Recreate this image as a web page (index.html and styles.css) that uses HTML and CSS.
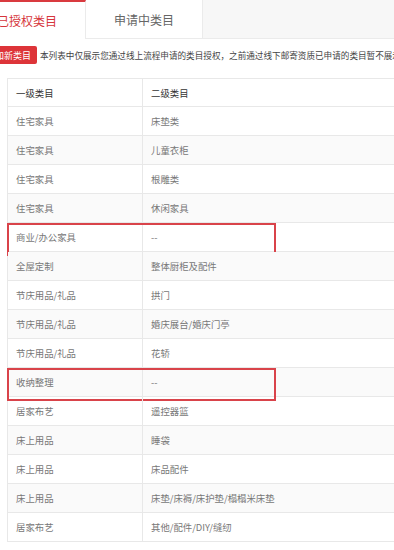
FILE: index.html
```html
<!DOCTYPE html>
<html lang="zh-CN">
<head>
<meta charset="utf-8">
<link rel="stylesheet" href="styles.css">
</head>
<body>
<div class="page">
  <div class="tabs">
    <div class="tab active">已授权类目</div>
    <div class="tab">申请中类目</div>
    <div class="tab-rest"></div>
  </div>
  <div class="toolbar">
    <span class="btn">添加新类目</span>
    <span class="notice">本列表中仅展示您通过线上流程申请的类目授权，之前通过线下邮寄资质已申请的类目暂不展示</span>
  </div>
  <div class="table">
    <div class="row head"><div class="c1">一级类目</div><div class="c2">二级类目</div></div>
    <div class="row"><div class="c1">住宅家具</div><div class="c2">床垫类</div></div>
    <div class="row alt"><div class="c1">住宅家具</div><div class="c2">儿童衣柜</div></div>
    <div class="row"><div class="c1">住宅家具</div><div class="c2">根雕类</div></div>
    <div class="row alt"><div class="c1">住宅家具</div><div class="c2">休闲家具</div></div>
    <div class="row marked"><div class="c1">商业/办公家具</div><div class="c2">--</div><span class="mark"></span></div>
    <div class="row alt"><div class="c1">全屋定制</div><div class="c2">整体厨柜及配件</div></div>
    <div class="row"><div class="c1">节庆用品/礼品</div><div class="c2">拱门</div></div>
    <div class="row alt"><div class="c1">节庆用品/礼品</div><div class="c2">婚庆展台/婚庆门亭</div></div>
    <div class="row"><div class="c1">节庆用品/礼品</div><div class="c2">花轿</div></div>
    <div class="row alt marked"><div class="c1">收纳整理</div><div class="c2">--</div><span class="mark"></span></div>
    <div class="row"><div class="c1">居家布艺</div><div class="c2">遥控器篮</div></div>
    <div class="row alt"><div class="c1">床上用品</div><div class="c2">睡袋</div></div>
    <div class="row"><div class="c1">床上用品</div><div class="c2">床品配件</div></div>
    <div class="row alt"><div class="c1">床上用品</div><div class="c2">床垫/床褥/床护垫/榻榻米床垫</div></div>
    <div class="row"><div class="c1">居家布艺</div><div class="c2">其他/配件/DIY/缝纫</div></div>
  </div>
</div>
</body>
</html>
```
FILE: styles.css
```css
html, body {
  margin: 0;
  padding: 0;
  background: #fff;
  overflow: hidden;
}
body {
  font-family: "Noto Sans CJK SC", "Noto Sans", sans-serif;
  color: #333;
}
.page {
  width: 394px;
  overflow: hidden;
}
.tabs {
  display: flex;
  height: 39px;
  margin-left: -31px;
  width: 600px;
  background: #f7f7f7;
}
.tab {
  width: 117px;
  box-sizing: border-box;
  display: flex;
  align-items: center;
  justify-content: center;
  font-size: 12px;
  color: #666;
  background: #fff;
  border-right: 1px solid #ebebeb;
  border-bottom: 1px solid #ebebeb;
}
.tab.active {
  color: #d6363c;
  border-top: 2px solid #d93a3f;
  border-bottom: none;
  padding-bottom: 1px;
}
.tab-rest {
  flex: 1;
  border-bottom: 1px solid #ebebeb;
}
.toolbar {
  display: flex;
  align-items: center;
  margin-top: 7px;
  margin-left: -20px;
  height: 18px;
  white-space: nowrap;
}
.btn {
  height: 18px;
  display: flex;
  align-items: center;
  padding: 0 6px;
  background: #dd3439;
  color: #fff;
  font-size: 9px;
  border-radius: 2px;
}
.notice {
  margin-left: 3px;
  font-size: 8.6px;
  color: #444;
}
.table {
  margin-top: 14px;
  margin-left: 7px;
  width: 500px;
  border-top: 1px solid #e8e8e8;
  border-left: 1px solid #e8e8e8;
}
.row {
  display: flex;
  height: 28px;
  border-bottom: 1px solid #e8e8e8;
  font-size: 9.4px;
  color: #777;
  position: relative;
}
.row.head {
  height: 27px;
  color: #333;
}
.row.alt {
  background: #fafafa;
}
.c1, .c2 {
  display: flex;
  align-items: center;
  padding-left: 8px;
}
.c1 {
  width: 135px;
  box-sizing: border-box;
  border-right: 1px solid #e8e8e8;
}
.c2 {
  flex: 1;
}
.mark {
  position: absolute;
  left: -1px;
  top: 0;
  width: 269px;
  height: 33px;
  box-sizing: border-box;
  border: 2px solid #d9434a;
}
```
